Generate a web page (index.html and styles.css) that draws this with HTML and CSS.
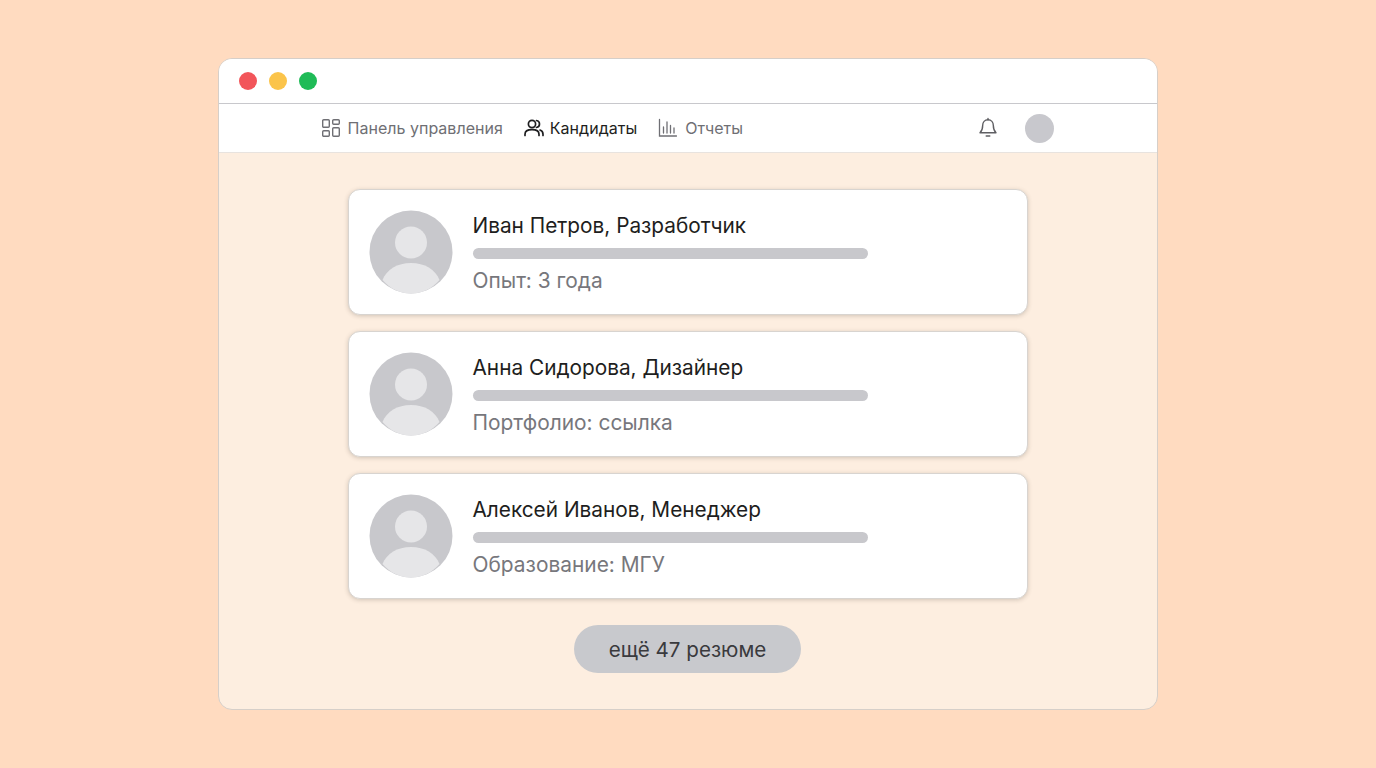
FILE: index.html
```html
<!DOCTYPE html>
<html lang="ru">
<head>
  <meta charset="UTF-8">
  <meta name="viewport" content="width=device-width, initial-scale=1.0">
  <title>Кандидаты</title>
  <link rel="stylesheet" href="styles.css">
</head>
<body>
  <div class="window">
    <div class="titlebar">
      <span class="dot red"></span>
      <span class="dot yellow"></span>
      <span class="dot green"></span>
    </div>
    <div class="nav">
      <div class="nav-links">
        <a class="nav-item">
          <svg class="nav-icon" width="20" height="20" viewBox="0 0 20 20" fill="none" stroke="currentColor" stroke-width="1.4">
            <rect x="1.7" y="1.7" width="6.6" height="7.6" rx="1"/>
            <rect x="11.7" y="1.7" width="6.6" height="4.6" rx="1"/>
            <rect x="1.7" y="12.7" width="6.6" height="5.6" rx="1"/>
            <rect x="11.7" y="9.7" width="6.6" height="8.6" rx="1"/>
          </svg>
          Панель управления
        </a>
        <a class="nav-item active">
          <svg class="nav-icon" width="20" height="20" viewBox="0 0 20 20" fill="none" stroke="currentColor" stroke-width="1.7" stroke-linecap="round">
            <circle cx="8" cy="6" r="3.6"/>
            <path d="M1 17.5v-1.2c0-2.800 2.400-4.600 7-4.600s7 1.800 7 4.600v1.200"/>
            <path d="M12.500 2.500c1.800.3 3 1.700 3 3.500s-1.200 3.200-3 3.500"/>
            <path d="M16 12c1.900.6 3 2.200 3 4.200v1.300"/>
          </svg>
          Кандидаты
        </a>
        <a class="nav-item">
          <svg class="nav-icon" width="20" height="20" viewBox="0 0 20 20" fill="none" stroke="currentColor" stroke-width="1.300" stroke-linecap="round">
            <path d="M1.500 1.500v16.500h17"/>
            <path d="M5.500 9v6M9 4v11M12.500 7.500V15M16 10v5"/>
          </svg>
          Отчеты
        </a>
      </div>
      <svg class="bell" width="20" height="22" viewBox="0 0 20 22" fill="none" stroke="currentColor" stroke-width="1.400" stroke-linejoin="round" stroke-linecap="round">
        <path d="M10 2.800c-3.300 0-5.300 2.400-5.300 5.500 0 4.200-1 5.800-2.700 7.500h16c-1.700-1.700-2.700-3.300-2.700-7.500 0-3.100-2-5.500-5.300-5.500z"/>
        <path d="M10 1.500v1.300M8.200 19h3.600"/>
      </svg>
      <span class="nav-avatar"></span>
    </div>
    <div class="content">
      <div class="card">
        <svg class="avatar" width="84" height="84" viewBox="0 0 84 84">
          <circle class="avatar-bg" cx="42" cy="42" r="41.500"/>
          <circle class="avatar-fg" cx="42" cy="32.500" r="16"/>
          <path class="avatar-fg" d="M13.500 70c4-10.500 15-17 28.500-17s24.500 6.500 28.500 17c-7.500 8.800-17.500 13.500-28.500 13.500S21 78.800 13.500 70z"/>
        </svg>
        <div class="card-body">
          <div class="card-title">Иван Петров, Разработчик</div>
          <div class="card-bar"></div>
          <div class="card-note">Опыт: 3 года</div>
        </div>
      </div>
      <div class="card">
        <svg class="avatar" width="84" height="84" viewBox="0 0 84 84">
          <circle class="avatar-bg" cx="42" cy="42" r="41.500"/>
          <circle class="avatar-fg" cx="42" cy="32.500" r="16"/>
          <path class="avatar-fg" d="M13.500 70c4-10.500 15-17 28.500-17s24.500 6.500 28.500 17c-7.500 8.800-17.500 13.500-28.500 13.500S21 78.800 13.500 70z"/>
        </svg>
        <div class="card-body">
          <div class="card-title">Анна Сидорова, Дизайнер</div>
          <div class="card-bar"></div>
          <div class="card-note">Портфолио: ссылка</div>
        </div>
      </div>
      <div class="card">
        <svg class="avatar" width="84" height="84" viewBox="0 0 84 84">
          <circle class="avatar-bg" cx="42" cy="42" r="41.500"/>
          <circle class="avatar-fg" cx="42" cy="32.500" r="16"/>
          <path class="avatar-fg" d="M13.500 70c4-10.500 15-17 28.500-17s24.500 6.500 28.500 17c-7.500 8.800-17.500 13.500-28.500 13.500S21 78.800 13.500 70z"/>
        </svg>
        <div class="card-body">
          <div class="card-title">Алексей Иванов, Менеджер</div>
          <div class="card-bar"></div>
          <div class="card-note">Образование: МГУ</div>
        </div>
      </div>
      <button class="more">ещё 47 резюме</button>
    </div>
  </div>
</body>
</html>
```

FILE: styles.css
```css
* {
  margin: 0;
  padding: 0;
  box-sizing: border-box;
}

body {
  height: 768px;
  overflow: hidden;
  padding-top: 58px;
  display: flex;
  justify-content: center;
  background-color: #ffdbc0;
  font-family: Inter, "Noto Sans", sans-serif;
}

.window {
  width: 940px;
  height: 652px;
  margin-left: -1px;
  display: flex;
  flex-direction: column;
  overflow: hidden;
  background-color: #fdeee0;
  border: 1px solid #d6cfc9;
  border-radius: 14px;
}

.titlebar {
  height: 45px;
  padding-left: 20px;
  display: flex;
  align-items: center;
  gap: 12px;
  background-color: #fff;
  border-bottom: 1px solid #c8c8cc;
}

.dot {
  width: 18px;
  height: 18px;
  border-radius: 50%;
}

.red {
  background-color: #f2555a;
}

.yellow {
  background-color: #fbc44a;
}

.green {
  background-color: #1fbb57;
}

.nav {
  height: 49px;
  padding-left: 102px;
  display: flex;
  align-items: center;
  background-color: #fff;
  border-bottom: 1px solid #e8e3df;
}

.nav-links {
  width: 657px;
  display: flex;
  align-items: center;
  gap: 21px;
}

.nav-item {
  display: flex;
  align-items: center;
  gap: 7px;
  font-size: 16px;
  letter-spacing: 0.02px;
  color: #6f6f74;
}

.nav-item.active {
  gap: 6px;
  color: #1e1e20;
}

.nav-icon {
  flex-shrink: 0;
}

.bell {
  color: #5f5f63;
}

.nav-avatar {
  width: 29px;
  height: 29px;
  margin-left: 27px;
  border-radius: 50%;
  background-color: #c8c8cd;
}

.content {
  flex: 1;
  padding-top: 36px;
  display: flex;
  flex-direction: column;
  align-items: center;
  gap: 16px;
}

.card {
  width: 680px;
  height: 126px;
  padding-left: 20px;
  display: flex;
  align-items: center;
  gap: 20px;
  background-color: #fff;
  border: 1px solid #d8d4d0;
  border-radius: 12px;
  box-shadow: 0 1px 4px rgba(80, 70, 60, 0.25);
}

.avatar-bg {
  fill: #c8c8cc;
}

.avatar-fg {
  fill: #e6e6e8;
}

.card-body {
  width: 395px;
  padding-top: 2px;
}

.card-title {
  font-size: 20.800px;
  line-height: 26px;
  color: #1e1e20;
}

.card-bar {
  height: 11px;
  margin: 9px 0 9px;
  border-radius: 6px;
  background-color: #c8c8cc;
}

.card-note {
  font-size: 20.900px;
  line-height: 26px;
  color: #77777c;
}

.more {
  width: 227px;
  height: 48px;
  margin-top: 10px;
  border: none;
  border-radius: 24px;
  background-color: #c8c9cd;
  font-family: inherit;
  font-size: 20.600px;
  color: #3a3a3d;
}
```
